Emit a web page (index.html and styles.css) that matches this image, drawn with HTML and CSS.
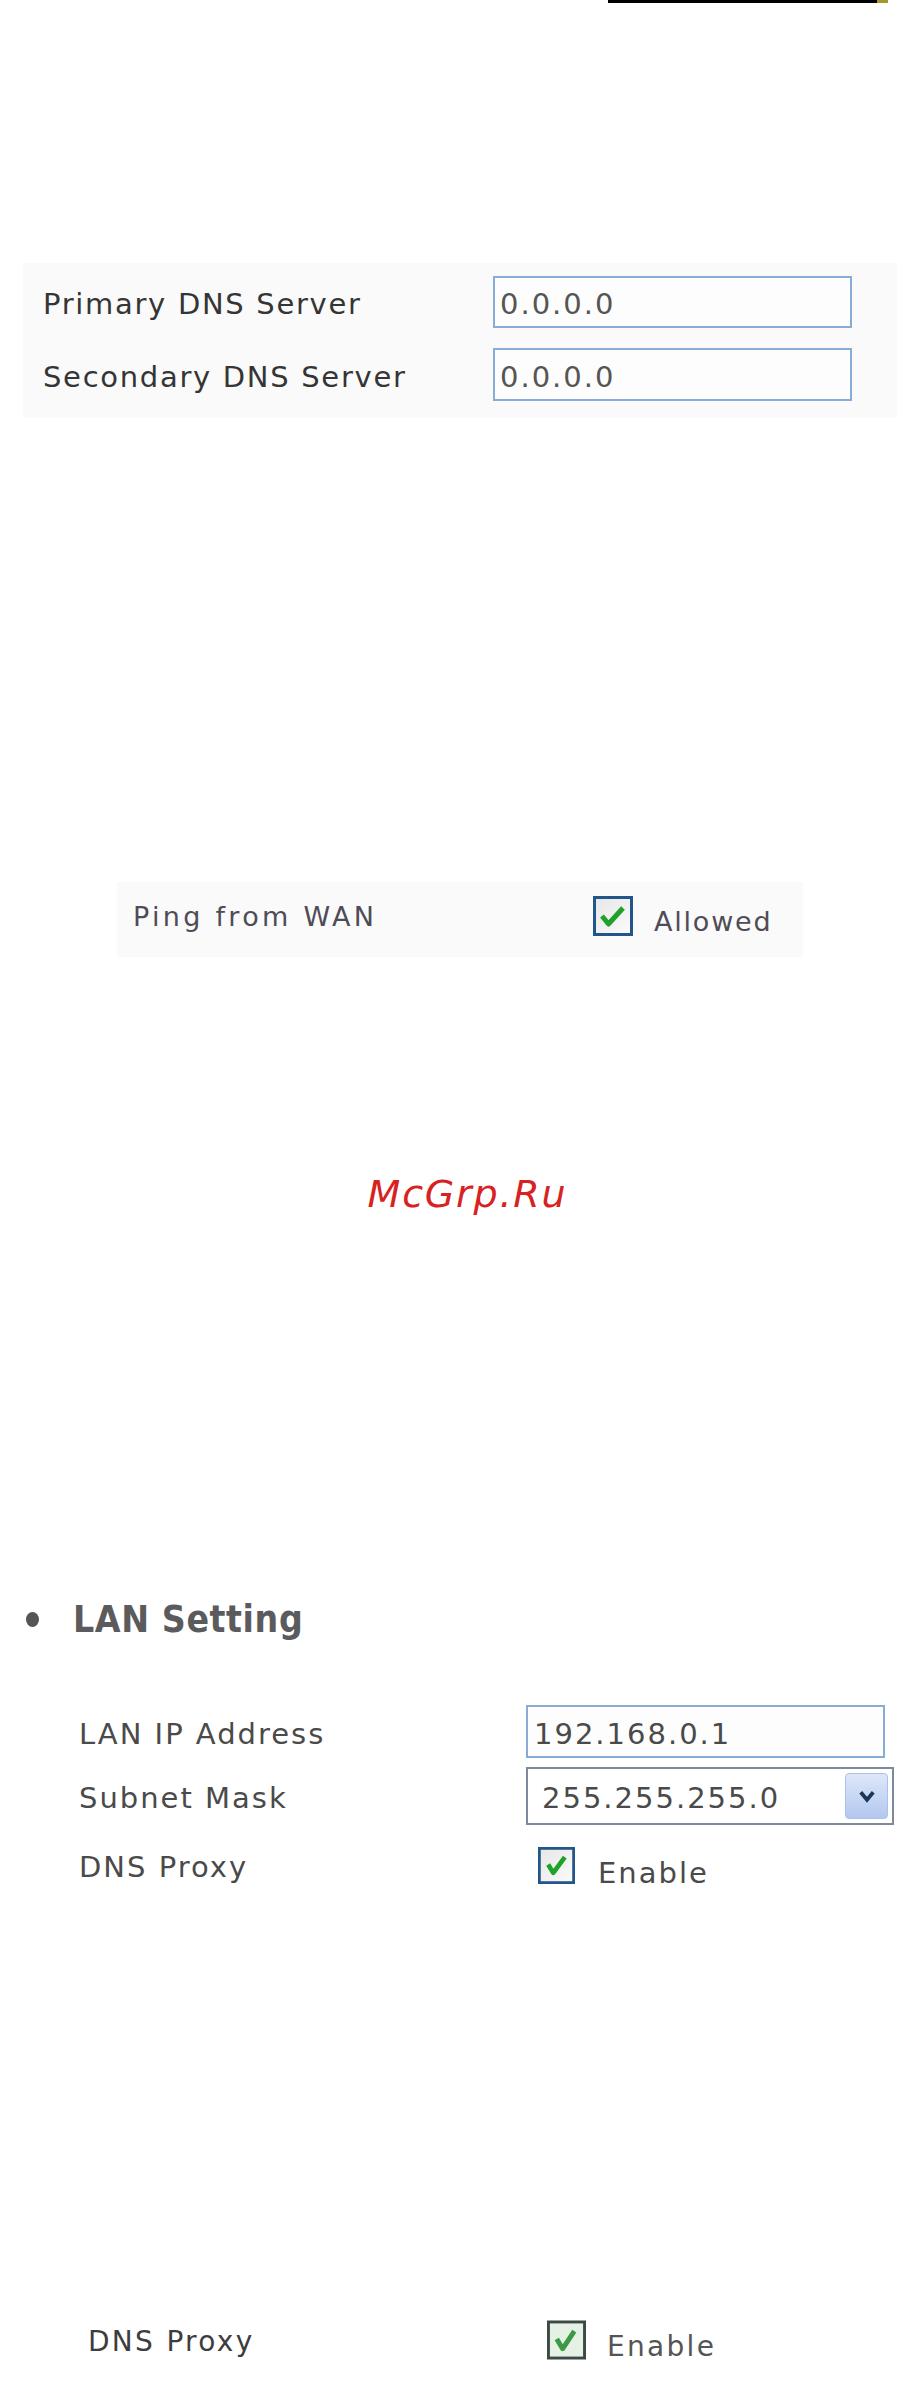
FILE: index.html
```html
<!doctype html>
<html lang="en">
<head>
<meta charset="utf-8">
<title>Router setup - WAN and LAN settings</title>
<link rel="stylesheet" href="styles.css">
</head>
<body>
  <div class="page">
    <div class="topbar">
      <span class="topbar-dark"></span>
      <span class="topbar-gold"></span>
    </div>

    <!-- DNS servers -->
    <div class="panel panel-dns">
      <div class="row row-dns">
        <span class="label pixel">Primary DNS Server</span>
        <div class="field field-dns pixel">0.0.0.0</div>
      </div>
      <div class="row row-dns">
        <span class="label pixel">Secondary DNS Server</span>
        <div class="field field-dns pixel">0.0.0.0</div>
      </div>
    </div>

    <!-- ping option -->
    <div class="panel panel-ping">
      <span class="label verd ping-label">Ping from WAN</span>
      <span class="check check-lg">
        <svg viewBox="0 0 40 40" width="40" height="40">
          <defs>
            <linearGradient id="boxfill" x1="0" y1="0" x2="1" y2="1">
              <stop offset="0" stop-color="#e6e6e6"/>
              <stop offset="1" stop-color="#fbfbfb"/>
            </linearGradient>
          </defs>
          <rect x="1.5" y="1.5" width="37" height="37" fill="url(#boxfill)" stroke="#22558a" stroke-width="3"/>
          <path d="M9 20 L15.5 28 L30 12" fill="none" stroke="#1fa12a" stroke-width="5" stroke-linejoin="round"/>
        </svg>
      </span>
      <span class="verd ping-value">Allowed</span>
    </div>

    <p class="brand">McGrp.Ru</p>

    <h2 class="section-title"><span class="dot"></span>LAN Setting</h2>

    <!-- LAN form -->
    <div class="lan">
      <div class="row row-ip">
        <span class="label tah">LAN IP Address</span>
        <div class="field field-lan tah">192.168.0.1</div>
      </div>
      <div class="row row-mask">
        <span class="label tah">Subnet Mask</span>
        <div class="select tah">
          <span>255.255.255.0</span>
          <span class="select-btn">
            <svg viewBox="0 0 16 16" width="20" height="20">
              <path d="M3 5 L8 11 L13 5" fill="none" stroke="#1d3557" stroke-width="3"/>
            </svg>
          </span>
        </div>
      </div>
      <div class="row row-proxy">
        <span class="label tah">DNS Proxy</span>
        <span class="check check-md">
          <svg viewBox="0 0 40 40" width="37" height="37">
            <rect x="1.5" y="1.5" width="37" height="37" fill="url(#boxfill)" stroke="#22558a" stroke-width="3"/>
            <path d="M11 19 L16.5 28 L29 11" fill="none" stroke="#1fa12a" stroke-width="5" stroke-linejoin="round"/>
          </svg>
        </span>
        <span class="tah enable">Enable</span>
      </div>
    </div>

    <!-- DNS proxy, close-up -->
    <div class="proxy-bottom">
      <span class="label pixel proxy-label">DNS Proxy</span>
      <span class="check check-sm">
        <svg viewBox="0 0 40 40" width="39" height="40">
          <rect x="1.5" y="1.5" width="37" height="37" fill="#e4f1e4" stroke="#3b4a44" stroke-width="3"/>
          <path d="M10 19 L16 29 L28 11" fill="none" stroke="#3c9a45" stroke-width="5" stroke-linejoin="round"/>
        </svg>
      </span>
      <span class="pixel proxy-value">Enable</span>
    </div>
  </div>
</body>
</html>
```

FILE: styles.css
```css
* {
  box-sizing: border-box;
}

body {
  margin: 0;
  background: #fff;
  font-family: "DejaVu Sans", Verdana, sans-serif;
  color: #333;
}

.page {
  width: 923px;
  height: 2385px;
  overflow: hidden;
}

.topbar {
  display: flex;
  height: 3px;
  margin-left: 608px;
}

.topbar-dark {
  width: 269px;
  background: #000;
}

.topbar-gold {
  width: 11px;
  background: #a8982c;
}

/* text styles */
.pixel {
  font-size: 29px;
  letter-spacing: 1.7px;
  color: #353535;
}

.verd {
  font-size: 27px;
  letter-spacing: 3.3px;
  color: #4f4c58;
}

.tah {
  font-size: 29px;
  letter-spacing: 2px;
  color: #4a4a4a;
}

.row {
  display: flex;
  align-items: center;
}

.label {
  flex: none;
}

/* panels */
.panel {
  background: #fafafa;
}

.panel-dns {
  width: 874px;
  height: 155px;
  margin: 260px 0 0 23px;
  padding: 13px 0 0 20px;
  display: flex;
  flex-direction: column;
  gap: 20px;
}

.row-dns {
  height: 52px;
}

.row-dns .label {
  width: 450px;
  padding-top: 4px;
}

.field {
  background: #fdfdfd;
  border: 2px solid #88acd8;
  display: flex;
  align-items: center;
}

.field-dns {
  width: 359px;
  height: 100%;
  padding: 4px 0 0 5px;
  color: #555;
  letter-spacing: 2px;
}

.row-dns + .row-dns {
  height: 53px;
}

.panel-ping {
  width: 686px;
  height: 75px;
  margin: 464px 0 0 117px;
  padding-left: 16px;
  display: flex;
  align-items: center;
}

.ping-label {
  width: 460px;
  margin-top: -6px;
}

.ping-value {
  margin-left: 21px;
  padding-top: 3px;
  letter-spacing: 1.8px;
}

.check {
  display: flex;
  flex: none;
}

.check-lg {
  margin-top: -8px;
}

/* watermark */
.brand {
  margin: 215px 0 0;
  padding-left: 12px;
  text-align: center;
  font-style: oblique;
  font-size: 38px;
  line-height: 45px;
  letter-spacing: 1.8px;
  color: #d82222;
}

.section-title {
  margin: 378px 0 0 26px;
  display: flex;
  align-items: center;
  font-family: "DejaVu Sans Condensed", "DejaVu Sans", sans-serif;
  font-weight: bold;
  font-size: 37px;
  line-height: 50px;
  letter-spacing: 0.6px;
  color: #5b5b5e;
}

.dot {
  width: 13px;
  height: 15px;
  margin-right: 34px;
  margin-top: -2px;
  border-radius: 50%;
  background: #555;
}

/* LAN form */
.lan {
  margin: 60px 0 0 79px;
}

.lan .label {
  width: 447px;
}

.row-ip {
  height: 53px;
}

.row-ip .label {
  padding-top: 4px;
}

.field-lan {
  width: 359px;
  height: 53px;
  padding: 4px 0 0 6px;
}

.row-mask {
  height: 58px;
  margin-top: 9px;
}

.row-mask .label {
  padding-top: 4px;
}

.select {
  width: 368px;
  height: 58px;
  border: 2px solid #7c8a9c;
  background: #fff;
  display: flex;
  align-items: center;
  justify-content: space-between;
  padding: 4px 4px 0 14px;
}

.select-btn {
  width: 43px;
  height: 46px;
  margin-top: -4px;
  border: 1px solid #adc1e6;
  border-radius: 4px;
  background: linear-gradient(#dde7f9, #b3c8f0);
  display: flex;
  align-items: center;
  justify-content: center;
}

.row-proxy {
  height: 37px;
  margin-top: 22px;
}

.row-proxy .label {
  width: 459px;
  padding-top: 2px;
}

.enable {
  margin-left: 23px;
  padding-top: 14px;
}

/* DNS proxy, close-up */
.proxy-bottom {
  display: flex;
  align-items: center;
  height: 40px;
  margin: 436px 0 0 88px;
}

.proxy-label {
  width: 459px;
  font-size: 28px;
  letter-spacing: 2.3px;
  padding-top: 3px;
  color: #3d3d3d;
}

.proxy-value {
  margin-left: 21px;
  padding-top: 12px;
  font-size: 28px;
  letter-spacing: 2.3px;
  color: #555;
}
```
